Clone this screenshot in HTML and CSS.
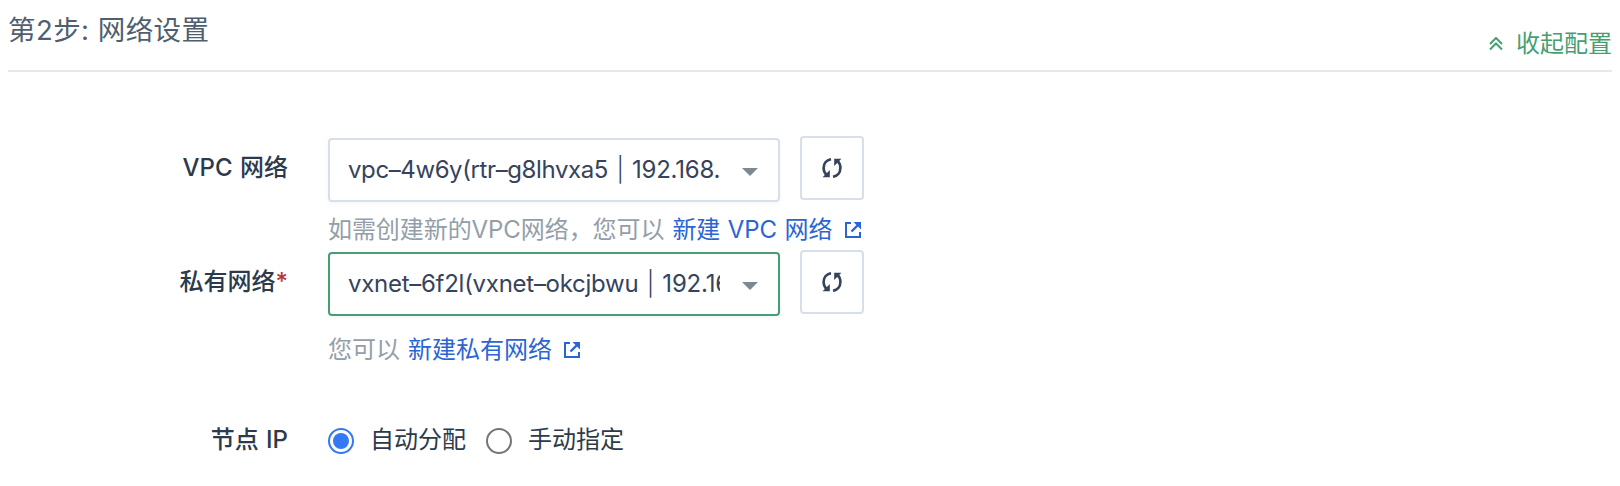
FILE: index.html
```html
<!DOCTYPE html>
<html lang="zh-CN">
<head>
<meta charset="utf-8">
<title>网络设置</title>
<link rel="stylesheet" href="styles.css">
</head>
<body>
<svg class="sprite" aria-hidden="true">
  <symbol id="refresh" viewBox="0 0 20 20">
    <path d="M9 1.200C4.600 2 1.600 5.500 1.600 10c0 3 1 5.300 2.900 7" fill="none" stroke="currentColor" stroke-width="2.600"/>
    <path d="M.6 19.200h7.200V12z" fill="currentColor"/>
    <path d="M11 18.800c4.400-.8 7.400-4.300 7.400-8.800 0-3-1-5.300-2.900-7" fill="none" stroke="currentColor" stroke-width="2.600"/>
    <path d="M19.400.8h-7.200V8z" fill="currentColor"/>
  </symbol>
  <symbol id="external" viewBox="0 0 16 16">
    <path d="M6 1H1v14h14v-5" fill="none" stroke="currentColor" stroke-width="2"/>
    <path d="M6.500 9.500l6-6" fill="none" stroke="currentColor" stroke-width="2.400"/>
    <path d="M8.500 0H16v7.500z" fill="currentColor"/>
  </symbol>
</svg>
<main class="page">
  <header class="header">
    <h2 class="title">第2步: 网络设置</h2>
    <a class="collapse">
      <svg class="chevrons" viewBox="0 0 14 14"><path d="M1 7l6-6 6 6M1 12.500l6-6 6 6" fill="none" stroke="currentColor" stroke-width="2"/></svg>
      <span>收起配置</span>
    </a>
  </header>
  <section class="row row-vpc">
    <div class="label"><span class="label-vpc">VPC 网络</span></div>
    <div class="control">
      <div class="picker">
        <div class="select"><span class="value value-vpc">vpc–4w6y(rtr–g8lhvxa5<i class="bar">|</i><span class="ip">192.168.</span></span><span class="arrow"></span></div>
        <button class="refresh"><svg><use href="#refresh"/></svg></button>
      </div>
      <p class="hint hint-vpc"><span class="hint-text">如需创建新的VPC网络，您可以</span><a class="link link-vpc">新建 VPC 网络</a><svg class="ext"><use href="#external"/></svg></p>
    </div>
  </section>
  <section class="row row-vxnet">
    <div class="label">私有网络<span class="star">*</span></div>
    <div class="control">
      <div class="picker">
        <div class="select active"><span class="value value-vxnet">vxnet–6f2l(vxnet–okcjbwu<i class="bar">|</i><span class="ip">192.16</span></span><span class="arrow"></span></div>
        <button class="refresh"><svg><use href="#refresh"/></svg></button>
      </div>
      <p class="hint hint-vxnet"><span>您可以</span><a class="link">新建私有网络</a><svg class="ext"><use href="#external"/></svg></p>
    </div>
  </section>
  <section class="row row-ip">
    <div class="label">节点 IP</div>
    <div class="radios">
      <span class="radio checked"></span><span class="radio-text">自动分配</span>
      <span class="radio"></span><span class="radio-text">手动指定</span>
    </div>
  </section>
</main>
</body>
</html>
```
FILE: styles.css
```css
* { box-sizing: border-box; }
body {
  margin: 0;
  background: #fff;
  color: #36435c;
  font: 24px/36px Inter, "Noto Sans CJK SC", sans-serif;
}
.sprite { display: none; }
.page { height: 486px; padding: 0 8px; overflow: hidden; }
.header {
  display: flex;
  justify-content: space-between;
  height: 72px;
  border-bottom: 2px solid #e3e9ef;
}
.title {
  margin: 10px 0 0;
  color: #4f5f70;
  font-size: 27.500px;
  font-weight: 400;
  letter-spacing: .45px;
  line-height: 40px;
}
.collapse {
  display: flex;
  align-items: center;
  height: 36px;
  margin-top: 26px;
  color: #479e71;
}
.chevrons { width: 14px; height: 14px; margin: 0 13px 0 0; }
.row { display: flex; }
.row-vpc { height: 114px; margin-top: 64px; }
.row-vxnet { height: 155px; }
.label {
  display: flex;
  justify-content: flex-end;
  width: 280px;
  margin-right: 40px;
  padding-top: 14px;
  color: #2c3a4b;
  font-weight: 500;
  word-spacing: 1px;
  white-space: pre;
}
.star { color: #bd3633; }
.picker { display: flex; gap: 20px; }
.select {
  display: flex;
  align-items: center;
  justify-content: space-between;
  width: 452px;
  height: 64px;
  margin-top: 2px;
  padding: 0 20px 0 18px;
  border: 2px solid #d8deea;
  border-radius: 4px;
  box-shadow: 0 2px 4px rgba(36, 46, 66, .04);
}
.active { border-color: #479e71; }
.value { width: 372px; overflow: hidden; white-space: nowrap; }
.value-vpc { letter-spacing: -.4px; }
.value-vxnet { letter-spacing: -.27px; }
.bar { display: inline-block; width: 24px; font-weight: 300; text-align: center; font-style: normal; }
.ip { letter-spacing: -.2px; }
.arrow {
  width: 0;
  margin-top: 3px;
  border: 8px solid transparent;
  border-top-color: #7d8894;
  border-bottom: 0;
}
.refresh {
  display: flex;
  align-items: center;
  justify-content: center;
  width: 64px;
  height: 64px;
  padding: 0;
  background: #fff;
  border: 2px solid #d8deea;
  border-radius: 4px;
  color: #36435c;
}
.refresh svg { width: 20px; height: 20px; }
.hint {
  display: flex;
  align-items: center;
  height: 36px;
  margin: 10px 0 0;
  color: #939ea9;
  white-space: nowrap;
}
.hint-text { letter-spacing: -.07px; }
.hint-vxnet { margin-top: 16px; }
.link { margin-left: 8px; color: #2b64d3; }
.link-vpc { word-spacing: .6px; }
.ext { width: 16px; height: 16px; margin-left: 12px; color: #2b64d3; }
.row-ip .label { padding-top: 17px; }
.radios { display: flex; align-items: center; height: 36px; margin-top: 18px; }
.radio {
  width: 26px;
  height: 26px;
  margin-right: 16px;
  border: 2px solid #767676;
  border-radius: 50%;
}
.checked { padding: 3px; border-color: #3478f6; background: #3478f6 content-box; }
.radio-text { margin: -2px 20px 0 0; color: #2c3a4b; }
```
